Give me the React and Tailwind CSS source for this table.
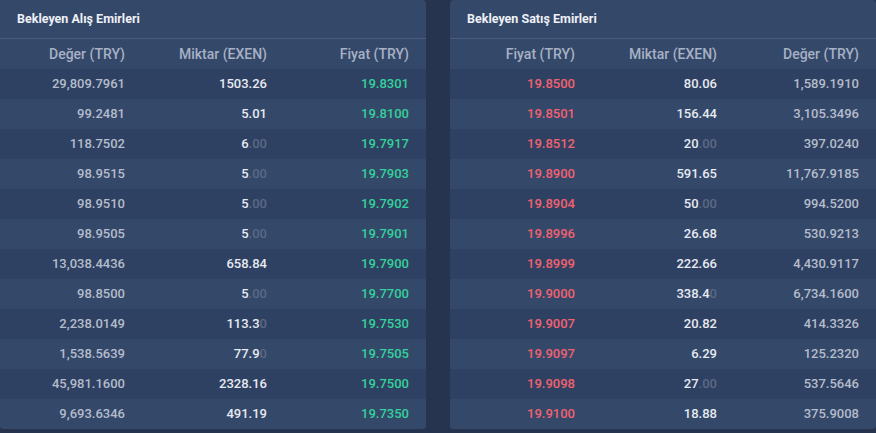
const buys = [
  ["29,809.7961", "1503.26", "", "19.8301"],
  ["99.2481", "5.01", "", "19.8100"],
  ["118.7502", "6", ".00", "19.7917"],
  ["98.9515", "5", ".00", "19.7903"],
  ["98.9510", "5", ".00", "19.7902"],
  ["98.9505", "5", ".00", "19.7901"],
  ["13,038.4436", "658.84", "", "19.7900"],
  ["98.8500", "5", ".00", "19.7700"],
  ["2,238.0149", "113.3", "0", "19.7530"],
  ["1,538.5639", "77.9", "0", "19.7505"],
  ["45,981.1600", "2328.16", "", "19.7500"],
  ["9,693.6346", "491.19", "", "19.7350"],
];

const sells = [
  ["19.8500", "80.06", "", "1,589.1910"],
  ["19.8501", "156.44", "", "3,105.3496"],
  ["19.8512", "20", ".00", "397.0240"],
  ["19.8900", "591.65", "", "11,767.9185"],
  ["19.8904", "50", ".00", "994.5200"],
  ["19.8996", "26.68", "", "530.9213"],
  ["19.8999", "222.66", "", "4,430.9117"],
  ["19.9000", "338.4", "0", "6,734.1600"],
  ["19.9007", "20.82", "", "414.3326"],
  ["19.9097", "6.29", "", "125.2320"],
  ["19.9098", "27", ".00", "537.5646"],
  ["19.9100", "18.88", "", "375.9008"],
];

const Amount = ({ value, dim }) => (
  <span className="text-[#e6eaf1]">
    {value}
    {dim && <span className="text-[#5a6985]">{dim}</span>}
  </span>
);

const Panel = ({ title, headers, rows, side, className }) => (
  <div className={`w-[427px] h-[429px] bg-[#34486a] overflow-hidden ${className}`}>
    {/* Title */}
    <div className="h-[38px] flex items-center px-[17px] text-[12.5px] font-bold text-[#eef1f6]">
      {title}
    </div>
    <div className="h-px bg-[#4a5d80]" />

    {/* Column headers */}
    <div className="grid grid-cols-3 h-[30px] items-center text-[14px] font-medium text-[#a7b1c4]">
      {headers.map((h) => (
        <div key={h} className="text-right pr-[17px]">
          {h}
        </div>
      ))}
    </div>

    {/* Rows */}
    {rows.map((r, i) => (
      <div
        key={i}
        className={`grid grid-cols-3 h-[30px] items-center text-[13px] font-medium ${
          i % 2 === 0 ? "bg-[#2f4162]" : "bg-[#34486a]"
        }`}
      >
        {side === "buy" ? (
          <>
            <div className="text-right pr-[17px] text-[#b4bccb]">{r[0]}</div>
            <div className="text-right pr-[17px]">
              <Amount value={r[1]} dim={r[2]} />
            </div>
            <div className="text-right pr-[17px] text-[#35d19a]">{r[3]}</div>
          </>
        ) : (
          <>
            <div className="text-right pr-[17px] text-[#f2616f]">{r[0]}</div>
            <div className="text-right pr-[17px]">
              <Amount value={r[1]} dim={r[2]} />
            </div>
            <div className="text-right pr-[17px] text-[#b4bccb]">{r[3]}</div>
          </>
        )}
      </div>
    ))}
  </div>
);

export default function App() {
  return (
    <div
      className="w-[876px] h-[433px] bg-[#263450] flex gap-[24px] overflow-hidden"
      style={{ fontFamily: "Roboto, 'Noto Sans', sans-serif" }}
    >
      <Panel
        title="Bekleyen Alış Emirleri"
        headers={["Değer (TRY)", "Miktar (EXEN)", "Fiyat (TRY)"]}
        rows={buys}
        side="buy"
        className="rounded-r-[4px] rounded-bl-[4px]"
      />
      <Panel
        title="Bekleyen Satış Emirleri"
        headers={["Fiyat (TRY)", "Miktar (EXEN)", "Değer (TRY)"]}
        rows={sells}
        side="sell"
        className="rounded-[4px]"
      />
    </div>
  );
}
